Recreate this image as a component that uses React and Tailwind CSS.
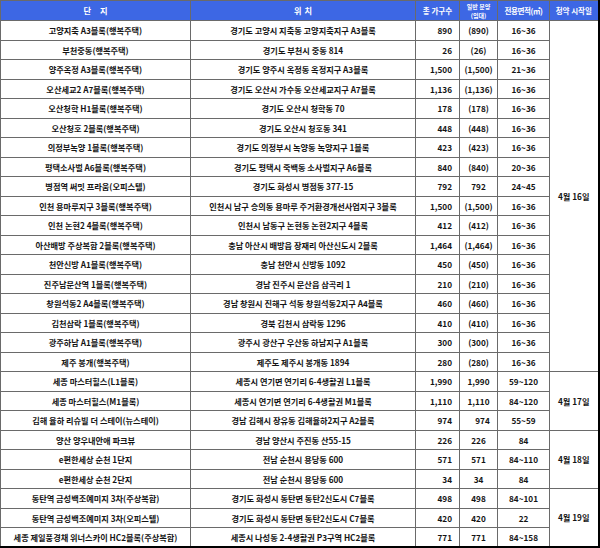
import React from 'react'

const rows = [
    ['고양지축 A3블록(행복주택)', '경기도 고양시 지축동 고양지축지구 A3블록', '890', '(890)', '16~36'],
    ['부천중동(행복주택)', '경기도 부천시 중동 814', '26', '(26)', '16~36'],
    ['양주옥정 A3블록(행복주택)', '경기도 양주시 옥정동 옥정지구 A3블록', '1,500', '(1,500)', '21~36'],
    ['오산세교2 A7블록(행복주택)', '경기도 오산시 가수동 오산세교지구 A7블록', '1,136', '(1,136)', '16~36'],
    ['오산청학 H1블록(행복주택)', '경기도 오산시 청학동 70', '178', '(178)', '16~36'],
    ['오산청호 2블록(행복주택)', '경기도 오산시 청호동 341', '448', '(448)', '16~36'],
    ['의정부녹양 1블록(행복주택)', '경기도 의정부시 녹양동 녹양지구 1블록', '423', '(423)', '16~36'],
    ['평택소사벌 A6블록(행복주택)', '경기도 평택시 죽백동 소사벌지구 A6블록', '840', '(840)', '20~36'],
    ['병점역 써밋 프라움(오피스텔)', '경기도 화성시 병점동 377-15', '792', '792', '24~45'],
    ['인천 용마루지구 3블록(행복주택)', '인천시 남구 승의동 용마루 주거환경개선사업지구 3블록', '1,500', '(1,500)', '16~36'],
    ['인천 논현2 4블록(행복주택)', '인천시 남동구 논현동 논현2지구 4블록', '412', '(412)', '16~36'],
    ['아산배방 주상복합 2블록(행복주택)', '충남 아산시 배방읍 장재리 아산신도시 2블록', '1,464', '(1,464)', '16~36'],
    ['천안신방 A1블록(행복주택)', '충남 천안시 신방동 1092', '450', '(450)', '16~36'],
    ['진주남문산역 1블록(행복주택)', '경남 진주시 문산읍 삼곡리 1', '210', '(210)', '16~36'],
    ['창원석동2 A4블록(행복주택)', '경남 창원시 진해구 석동 창원석동2지구 A4블록', '460', '(460)', '16~36'],
    ['김천삼락 1블록(행복주택)', '경북 김천시 삼락동 1296', '410', '(410)', '16~36'],
    ['광주하남 A1블록(행복주택)', '광주시 광산구 우산동 하남지구 A1블록', '300', '(300)', '16~36'],
    ['제주 봉개(행복주택)', '제주도 제주시 봉개동 1894', '280', '(280)', '16~36'],
    ['세종 마스터힐스(L1블록)', '세종시 연기면 연기리 6-4생활권 L1블록', '1,990', '1,990', '59~120'],
    ['세종 마스터힐스(M1블록)', '세종시 연기면 연기리 6-4생활권 M1블록', '1,110', '1,110', '84~120'],
    ['김해 율하 리슈빌 더 스테이(뉴스테이)', '경남 김해시 장유동 김해율하2지구 A2블록', '974', '974', '55~59'],
    ['양산 양우내안애 파크뷰', '경남 양산시 주진동 산55-15', '226', '226', '84'],
    ['e편한세상 순천 1단지', '전남 순천시 용당동 600', '571', '571', '84~110'],
    ['e편한세상 순천 2단지', '전남 순천시 용당동 600', '34', '34', '84'],
    ['동탄역 금성백조예미지 3차(주상복합)', '경기도 화성시 동탄면 동탄2신도시 C7블록', '498', '498', '84~101'],
    ['동탄역 금성백조예미지 3차(오피스텔)', '경기도 화성시 동탄면 동탄2신도시 C7블록', '420', '420', '22'],
    ['세종 제일풍경채 위너스카이 HC2블록(주상복합)', '세종시 나성동 2-4생활권 P3구역 HC2블록', '771', '771', '84~158'],
]

// 청약 시작일 merged cells: first row index -> [span, label]
const dates = {
    0: [18, '4월 16일'],
    18: [3, '4월 17일'],
    21: [3, '4월 18일'],
    24: [3, '4월 19일'],
}

const cell = 'border border-[#6a6a6a] h-[19.5px] p-0 align-middle whitespace-nowrap'
const head = 'border border-[#6a6a6a] h-[20px] p-0 align-middle whitespace-nowrap'

const App = () => {
    return (
        <div className="w-[600px] h-[548px] bg-white font-['Noto_Sans_CJK_KR',sans-serif] text-[#141414]">
            <table className="table-fixed border-collapse w-[598px] border-r-2 border-b-2 border-r-black border-b-black text-[8.2px] font-bold leading-none">
                <colgroup>
                    <col className="w-[190px]" />
                    <col className="w-[225px]" />
                    <col className="w-[44px]" />
                    <col className="w-[38px]" />
                    <col className="w-[52px]" />
                    <col className="w-[49px]" />
                </colgroup>
                <thead>
                    <tr className="bg-[#3d67e4] text-white">
                        <th className={head}>
                            <span className="inline-flex gap-[9px]"><span>단</span><span>지</span></span>
                        </th>
                        <th className={head}>
                            <span className="inline-flex gap-[3px]"><span>위</span><span>치</span></span>
                        </th>
                        <th className={`${head} text-[7.5px]`}>총 가구수</th>
                        <th className={`${head} text-[6px]`}>
                            <div className="flex flex-col items-center leading-[9px]">
                                <span>일반 분양</span>
                                <span>(임대)</span>
                            </div>
                        </th>
                        <th className={`${head} text-[7.5px] tracking-[-0.4px]`}>전용면적(㎡)</th>
                        <th className={`${head} text-[7.5px]`}>청약 시작일</th>
                    </tr>
                </thead>
                <tbody>
                    {rows.map((r, i) => (
                        <tr key={i}>
                            <td className={`${cell} text-center`}>{r[0]}</td>
                            <td className={`${cell} text-center`}>{r[1]}</td>
                            <td className={`${cell} text-right pr-[7px]`}>{r[2]}</td>
                            <td className={`${cell} text-center ${r[3] === '974' ? 'pl-[8px]' : ''}`}>{r[3]}</td>
                            <td className={`${cell} text-center`}>{r[4]}</td>
                            {dates[i] && (
                                <td rowSpan={dates[i][0]} className="border border-[#6a6a6a] p-0 text-center align-middle">
                                    {dates[i][1]}
                                </td>
                            )}
                        </tr>
                    ))}
                </tbody>
            </table>
        </div>
    )
}

export default App
